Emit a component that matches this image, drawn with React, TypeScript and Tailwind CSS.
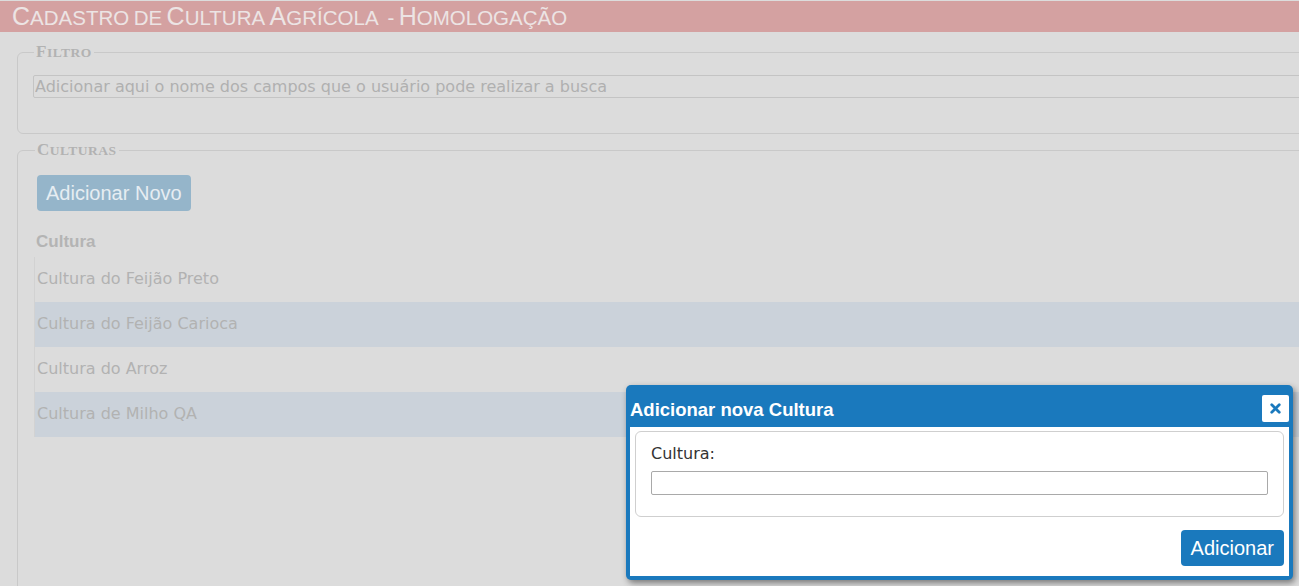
import { X } from "lucide-react";

const culturas = [
  "Cultura do Feijão Preto",
  "Cultura do Feijão Carioca",
  "Cultura do Arroz",
  "Cultura de Milho QA",
];

// Small caps drawn with two sizes so the ratio matches the original page
function Caps({ text, big, small }: { text: string; big: string; small: string }) {
  return (
    <>
      {text.split(/(\s+)/).map((w, i) => {
        if (/^\s+$/.test(w)) return <span key={i} className="whitespace-pre">{w}</span>;
        const first = w[0];
        const isUpper = first === first.toUpperCase() && first !== first.toLowerCase();
        return (
          <span key={i}>
            {isUpper ? <span className={big}>{first}</span> : <span className={small}>{first.toUpperCase()}</span>}
            <span className={small}>{w.slice(1).toUpperCase()}</span>
          </span>
        );
      })}
    </>
  );
}

function Legend({ text }: { text: string }) {
  return (
    <legend className="ml-[1px] px-[2px] font-['Liberation_Serif',serif] font-bold leading-[17px] tracking-[0.5px] text-[#b2b2b2]">
      <Caps text={text} big="text-[17px]" small="text-[13.5px]" />
    </legend>
  );
}

export default function App() {
  return (
    <div className="relative h-[586px] w-full overflow-hidden bg-[#dcdcdc] font-['DejaVu_Sans',sans-serif]">
      {/* Page (dimmed behind the modal) */}
      <div className="w-[1360px] pt-px">
        <header className="flex h-[31px] items-center bg-[#d4a1a1] pl-[12px]">
          <h1 className="whitespace-pre font-['Liberation_Sans',Arial,sans-serif] leading-none text-[#ece4e4]">
            <Caps text="Cadastro de Cultura Agrícola  - Homologação" big="text-[25px]" small="text-[20.5px]" />
          </h1>
        </header>

        <div className="px-[17px] pt-[11px]">
          <fieldset className="h-[91px] rounded-md border border-[#c9c9c9] px-[15px]">
            <Legend text="Filtro" />
            <input
              className="mt-[14px] h-[23px] w-full rounded-[2px] border border-[#c4c4c4] bg-transparent px-[1px] text-[16px] text-[#b0b0b0] outline-none placeholder:text-[#b0b0b0]"
              placeholder="Adicionar aqui o nome dos campos que o usuário pode realizar a busca"
            />
          </fieldset>

          <fieldset className="mt-[7px] h-[460px] rounded-md border border-[#c9c9c9] px-[16px]">
            <Legend text="Culturas" />
            <button className="mt-[16px] ml-[3px] h-[36px] rounded-[4px] bg-[#95b5ca] px-[9px] font-['Liberation_Sans',Arial,sans-serif] text-[20px] text-[#e6edf2]">
              Adicionar Novo
            </button>
            <div className="mt-[18px] pl-[2px] font-['Liberation_Sans',Arial,sans-serif] text-[17px] font-bold text-[#b4b4b4]">
              Cultura
            </div>
            <div className="mt-[2px] border-l border-[#d2d2d2]">
              {culturas.map((c, i) => (
                <div
                  key={c}
                  className={`flex h-[45px] items-center pl-[2px] text-[16px] text-[#b2b2b2] ${
                    i % 2 === 1 ? "bg-[#cbd2da]" : ""
                  }`}
                >
                  {c}
                </div>
              ))}
            </div>
          </fieldset>
        </div>
      </div>

      {/* Modal */}
      <div className="absolute left-[626px] top-[385px] w-[667px] rounded-[5px] bg-[#1a79bd] p-[4px] shadow-[2px_3px_6px_rgba(0,0,0,0.45)]">
        <div className="flex h-[38px] items-center justify-between">
          <span className="mt-[3px] font-['Liberation_Sans',Arial,sans-serif] text-[18.5px] font-bold text-white">
            Adicionar nova Cultura
          </span>
          <button className="flex h-[27px] w-[27px] items-center justify-center rounded-[2px] bg-white">
            <X className="h-[15px] w-[15px] text-[#1a79bd]" strokeWidth={4.5} />
          </button>
        </div>
        <div className="bg-white px-[5px] pt-[4px] pb-[10px]">
          <div className="rounded-md border border-[#cfcfcf] px-[15px] pt-[11px] pb-[21px]">
            <label className="block text-[16px] leading-[22px] text-[#333]">Cultura:</label>
            <input className="mt-[6px] h-[24px] w-full rounded-[2px] border border-[#a9a9a9] outline-none" />
          </div>
          <div className="mt-[13px] flex justify-end">
            <button className="h-[36px] rounded-[4px] bg-[#1a79bd] px-[10px] font-['Liberation_Sans',Arial,sans-serif] text-[20px] text-white">
              Adicionar
            </button>
          </div>
        </div>
      </div>
    </div>
  );
}
